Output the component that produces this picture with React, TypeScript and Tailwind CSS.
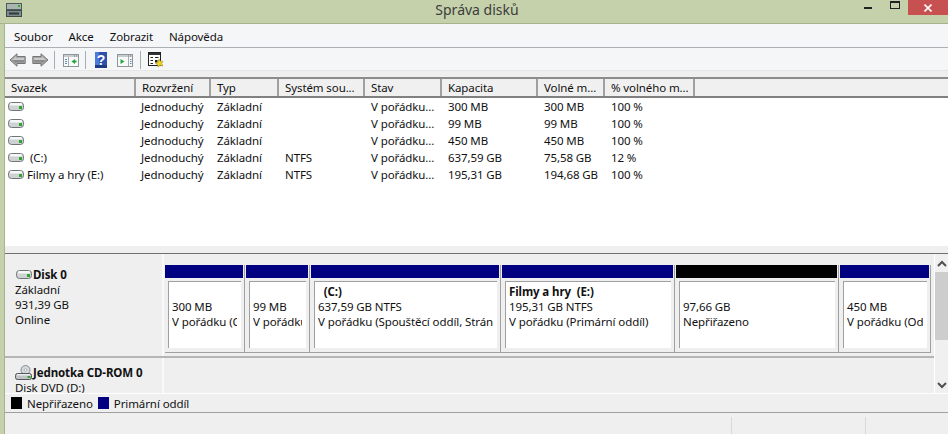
const FONT = "font-['Noto_Sans',sans-serif]";

const DriveIcon = ({ className = "" }: { className?: string }) => (
  <svg width="16" height="9" viewBox="0 0 16 9" className={className}>
    <rect x="0.5" y="0.5" width="15" height="8" rx="3" fill="#cfd2d3" stroke="#6f7579" />
    <rect x="2" y="1" width="12" height="2.5" rx="1" fill="#f6f7f7" />
    <rect x="11" y="4" width="3" height="3" fill="#2fa52f" />
  </svg>
);

const CdIcon = () => (
  <svg width="18" height="15" viewBox="0 0 18 15">
    <circle cx="10.5" cy="5" r="4.5" fill="#d4dadd" stroke="#858c90" />
    <circle cx="10.5" cy="5" r="1.3" fill="#fff" stroke="#858c90" strokeWidth="0.6" />
    <rect x="0.5" y="8.5" width="16" height="6" rx="2" fill="#bfc3c5" stroke="#4f5558" />
    <rect x="2" y="9" width="13" height="1.5" fill="#eceeee" />
    <rect x="12.5" y="11" width="3" height="2" fill="#2fa52f" />
  </svg>
);

const ArrowIcon = ({ flip }: { flip?: boolean }) => (
  <svg width="17" height="14" viewBox="0 0 17 14" className={flip ? "-scale-x-100" : ""}>
    <path d="M1 7 L8 0.8 V3.5 H16.2 V10.5 H8 V13.2 Z" fill="#a9a9a9" stroke="#757575" strokeLinejoin="round" />
    <path d="M3 7 L7 3.5 V5 H15 V7 Z" fill="#c9c9c9" />
    <path d="M3 7 H15 V9.5 H7 V10.5 Z" fill="#8c8c8c" />
  </svg>
);

const PaneIcon = ({ right }: { right?: boolean }) => (
  <svg width="16" height="13" viewBox="0 0 16 13">
    <rect x="0.5" y="0.5" width="15" height="12" fill="#f8f9f9" stroke="#8f969a" />
    <rect x="1" y="1" width="14" height="2" fill="#c6cbcf" />
    <rect x="11" y="1.5" width="1" height="1" fill="#6f767a" />
    <rect x="13" y="1.5" width="1" height="1" fill="#6f767a" />
    {right ? (
      <>
        <path d="M11.5 3 V12" stroke="#a5abaf" />
        <path d="M3.5 5 L7.5 7.5 L3.5 10 Z" fill="#27a83c" />
        <path d="M13 5.5 H14.5 M13 7.5 H14.5 M13 9.5 H14.5" stroke="#5d86b8" />
      </>
    ) : (
      <>
        <path d="M5.5 3 V12" stroke="#a5abaf" />
        <path d="M12 5 L8.5 7.5 L12 10 Z" fill="#27a83c" />
        <rect x="12" y="6.5" width="1.5" height="2" fill="#27a83c" />
        <path d="M2 5.5 H4 M2 7.5 H4 M2 9.5 H4" stroke="#5d86b8" />
      </>
    )}
  </svg>
);

const HelpIcon = () => (
  <svg width="12" height="16" viewBox="0 0 12 16">
    <rect width="12" height="16" fill="#2b52ad" />
    <rect width="4" height="16" fill="#4d79d8" />
    <rect y="13" width="12" height="3" fill="#1d3a86" />
    <text x="6" y="13" textAnchor="middle" fontSize="14" fontFamily="Liberation Sans" fontWeight="bold" fill="#fff">?</text>
  </svg>
);

const PropsIcon = () => (
  <svg width="16" height="16" viewBox="0 0 16 16">
    <rect x="0.5" y="0.5" width="12" height="13" fill="#fff" stroke="#222" />
    <rect x="1" y="1" width="11" height="2" fill="#333" />
    <path d="M2.5 5.5 H5 M7 5.5 H10.5 M2.5 8.5 H5 M2.5 11.5 H5" stroke="#222" />
    <rect x="7" y="8" width="2.5" height="2.5" fill="#222" />
    <path d="M11 7 L12.2 9 L15 9.5 L13.5 11.5 L15 14 L12 13.5 L10 15 L9.5 12.5 L7.5 11.5 L10 10 Z" fill="#f2d21f" stroke="#8a7a10" strokeWidth="0.5" />
  </svg>
);

const Separator = ({ className = "" }: { className?: string }) => (
  <div className={`w-px h-[18px] bg-[#a8adb0] ${className}`} />
);

const columns = [
  { label: "Svazek", w: "w-[131px]" },
  { label: "Rozvržení", w: "w-[75px]" },
  { label: "Typ", w: "w-[68px]" },
  { label: "Systém sou...", w: "w-[86px]" },
  { label: "Stav", w: "w-[77px]" },
  { label: "Kapacita", w: "w-[96px]" },
  { label: "Volné m...", w: "w-[67px]" },
  { label: "% volného m...", w: "w-[90px]" },
];

const rows = [
  ["", "Jednoduchý", "Základní", "", "V pořádku...", "300 MB", "300 MB", "100 %"],
  ["", "Jednoduchý", "Základní", "", "V pořádku...", "99 MB", "99 MB", "100 %"],
  ["", "Jednoduchý", "Základní", "", "V pořádku...", "450 MB", "450 MB", "100 %"],
  [" (C:)", "Jednoduchý", "Základní", "NTFS", "V pořádku...", "637,59 GB", "75,58 GB", "12 %"],
  ["Filmy a hry (E:)", "Jednoduchý", "Základní", "NTFS", "V pořádku...", "195,31 GB", "194,68 GB", "100 %"],
];

const partitions = [
  { w: "w-[80px]", bar: "bg-[#000080]", title: "", lines: ["300 MB", "V pořádku (O"] },
  { w: "w-[64px]", bar: "bg-[#000080]", title: "", lines: ["99 MB", "V pořádku"] },
  { w: "w-[190px]", bar: "bg-[#000080]", title: "  (C:)", lines: ["637,59 GB NTFS", "V pořádku (Spouštěcí oddíl, Strán"] },
  { w: "w-[173px]", bar: "bg-[#000080]", title: "Filmy a hry  (E:)", lines: ["195,31 GB NTFS", "V pořádku (Primární oddíl)"] },
  { w: "w-[163px]", bar: "bg-black", title: "", lines: ["97,66 GB", "Nepřiřazeno"] },
  { w: "w-[91px]", bar: "bg-[#000080]", title: "", lines: ["450 MB", "V pořádku (Od"] },
];

const App = () => {
  return (
    <div className={`${FONT} w-[948px] h-[434px] overflow-hidden flex flex-col bg-[#c5d1aa] text-[11.5px] leading-[15px] tracking-[-0.1px] text-[#111]`}>
      {/* Title bar */}
      <div className="h-[24px] shrink-0 grid grid-cols-[1fr_auto_1fr] items-start border-b border-[#a6b48d]">
        <div className="pl-[6px] pt-[3px]">
          <svg width="16" height="14" viewBox="0 0 16 14" className="block">
            <rect x="0.5" y="0.5" width="15" height="6" fill="#a9b5ad" stroke="#4f5a5c" />
            <rect x="0.5" y="7.5" width="15" height="6" fill="#7c8a8c" stroke="#3f4a4c" />
            <rect x="3" y="9.5" width="10" height="2" fill="#2f383a" />
            <rect x="12" y="2" width="2" height="2" fill="#35a935" />
          </svg>
        </div>
        <div className="pl-[6px] text-[14px] leading-[20px] tracking-normal text-[#3c3c3c]">Správa disků</div>
        <div className="flex justify-end items-start">
          <div className="w-[8px] h-[2px] bg-[#222] mt-[7px] mr-[18px]" />
          <div className="w-[10px] h-[8px] border border-t-2 border-[#222] mt-[1px] mr-[8px]" />
          <div className="w-[40px] h-[15px] bg-[#c75050] flex items-center justify-center">
            <svg width="8" height="8" viewBox="0 0 8 8">
              <path d="M0.5 0.5 L7.5 7.5 M7.5 0.5 L0.5 7.5" stroke="#fff" strokeWidth="1.6" />
            </svg>
          </div>
        </div>
      </div>

      {/* Window body */}
      <div className="ml-[4px] flex-1 min-h-0 flex flex-col bg-[#efefef] border-l border-[#a6b48d]">
        {/* Menu */}
        <div className="h-[24px] shrink-0 bg-[#f5f6f8] border-b border-[#adafb5] flex items-center pt-[1px] pl-[9px] gap-[16px]">
          <span>Soubor</span>
          <span>Akce</span>
          <span>Zobrazit</span>
          <span>Nápověda</span>
        </div>
        {/* Toolbar */}
        <div className="h-[22px] shrink-0 bg-[#f5f6f8] flex items-center pt-[2px] pl-[4px]">
          <ArrowIcon />
          <div className="ml-[6px] flex"><ArrowIcon flip /></div>
          <Separator className="ml-[5px]" />
          <div className="ml-[8px] flex"><PaneIcon /></div>
          <Separator className="ml-[6px]" />
          <div className="ml-[9px] flex"><HelpIcon /></div>
          <div className="ml-[10px] flex"><PaneIcon right /></div>
          <Separator className="ml-[7px]" />
          <div className="ml-[7px] flex"><PropsIcon /></div>
        </div>
        <div className="h-[7px] shrink-0 bg-[#efefef] border-t border-[#e6e6e6]" />

        {/* Volume list */}
        <div className="h-[169px] shrink-0 flex flex-col bg-white border-t-2 border-[#8c8c8c]">
          <div className="h-[19px] shrink-0 flex bg-[#f0f0f0] border-b-2 border-[#808080]">
            {columns.map((c) => (
              <div key={c.label} className={`${c.w} shrink-0 pl-[6px] border-r-2 border-[#a0a0a0] whitespace-nowrap overflow-hidden flex items-center`}>
                {c.label}
              </div>
            ))}
          </div>
          <div>
            {rows.map((r, i) => (
              <div key={i} className="h-[17px] flex items-center">
                {r.map((cell, j) => (
                  <div key={j} className={`${columns[j].w} shrink-0 whitespace-pre overflow-hidden ${j === 0 ? "flex items-center pl-[3px]" : j === 1 ? "pl-[5px]" : "pl-[6px]"}`}>
                    {j === 0 && <DriveIcon className="mr-[3px] shrink-0" />}
                    {cell}
                  </div>
                ))}
              </div>
            ))}
          </div>
        </div>

        {/* Split bar */}
        <div className="h-[8px] shrink-0 bg-[#efefef] border-b border-[#707070]" />

        {/* Graphic view */}
        <div className="h-[139px] shrink-0 flex overflow-hidden">
          <div className="flex-1 min-w-0 flex flex-col">
            <div className="h-[104px] shrink-0 flex border-b-2 border-[#b5b5b5]">
              <div className="w-[159px] shrink-0 pl-[10px] pt-[13px] border-r-2 border-[#f9f9f9] flex flex-col">
                <div className="flex items-center font-bold h-[15px]">
                  <DriveIcon className="ml-px mr-px" />
                  Disk 0
                </div>
                <div>Základní</div>
                <div>931,39 GB</div>
                <div>Online</div>
              </div>
              <div className="pl-[1px] pt-[11px]">
                <div className="h-[88px] flex gap-[1px] border-b border-[#a0a0a0]">
                  {partitions.map((p, i) => (
                    <div key={i} className={`${p.w} shrink-0 pr-[1px] border-r border-[#a0a0a0]`}>
                      <div className={`h-[13px] ${p.bar}`} />
                      <div className="pt-[3px] pl-[3px] pr-[2px]">
                        <div className="h-[67px] bg-white border-l border-t border-[#a0a0a0] pl-[3px] pr-[4px] pt-[2px]">
                          <div className="overflow-hidden whitespace-nowrap">
                            <div className="font-bold whitespace-pre h-[15px]">{p.title}</div>
                            {p.lines.map((l) => (
                              <div key={l}>{l}</div>
                            ))}
                          </div>
                        </div>
                      </div>
                    </div>
                  ))}
                </div>
              </div>
            </div>
            <div className="flex-1 flex">
              <div className="w-[159px] shrink-0 pl-[10px] pt-[7px] border-r-2 border-[#f9f9f9]">
                <div className="flex items-center font-bold h-[15px]">
                  <CdIcon />
                  Jednotka CD-ROM 0
                </div>
                <div>Disk DVD (D:)</div>
              </div>
            </div>
          </div>
          <div className="w-[14px] shrink-0 bg-[#f0f0f0] border-l border-white flex flex-col items-center">
            <svg width="10" height="18" viewBox="0 0 10 18" className="shrink-0"><path d="M1 12 L5 8 L9 12" fill="none" stroke="#505050" strokeWidth="2" /></svg>
            <div className="w-full h-[68px] bg-[#cdcdcd]" />
            <div className="flex-1" />
            <svg width="10" height="16" viewBox="0 0 10 16" className="shrink-0"><path d="M1 6 L5 10 L9 6" fill="none" stroke="#505050" strokeWidth="2" /></svg>
          </div>
        </div>

        {/* Legend */}
        <div className="h-[20px] shrink-0 flex items-center border-b border-[#a0a0a0] pl-[6px] border-t border-t-white">
          <div className="w-[11px] h-[12px] bg-black mr-[5px]" />
          <span>Nepřiřazeno</span>
          <div className="w-[11px] h-[12px] bg-[#000080] mx-[5px]" />
          <span>Primární oddíl</span>
        </div>

        {/* Status bar */}
        <div className="flex-1 flex justify-end">
          <div className="w-[134px] border-l border-[#d9d9d9] mt-[4px]" />
          <div className="w-[83px] border-l border-[#d9d9d9] mt-[4px]" />
        </div>
      </div>
    </div>
  );
};

export default App;
